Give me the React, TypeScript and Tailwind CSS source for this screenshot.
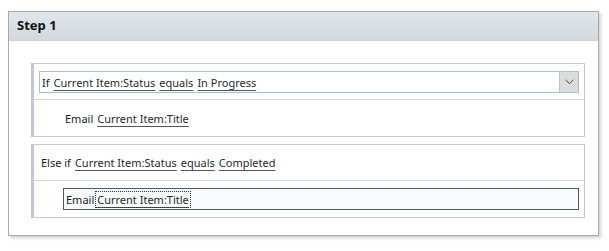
import React from "react";

const L = ({ children }: { children: React.ReactNode }) => (
  <span className="underline decoration-[#555] underline-offset-[3px] text-[#2a2a2a]">{children}</span>
);

export default function App() {
  return (
    <div className="w-[609px] h-[251px] bg-white pt-[11px] pl-[8px] text-[11px] text-[#1a1a1a]" style={{ fontFamily: '"Noto Sans", "Open Sans", sans-serif' }}>
      <div className="w-[591px] h-[225px] border border-[#a9a9a9] bg-white shadow-[2px_2px_3px_rgba(0,0,0,0.18)] flex flex-col">
        <div className="h-[29px] flex items-center pl-[8px] bg-gradient-to-b from-[#e1e5ec] to-[#d3d7de] border-b border-[#d0d3d8]">
          <span className="font-bold text-[13px] text-[#111]">Step 1</span>
        </div>
        <div className="pl-[22px] pr-[13px] pt-[22px] flex flex-col gap-[7px]">
          <div className="h-[74px] border border-[#c9c9c9] border-l-[3px] border-l-[#c3c5da] flex flex-col">
            <div className="h-[36px] border-b border-[#d6d6d6] pl-[5px] pr-[5px] pt-[7px]">
              <div className="h-[22px] border border-[#a9bfcc] flex items-center justify-between pl-[2px]">
                <div className="flex gap-[4px] leading-none">
                  <span>If</span>
                  <L>Current Item:Status</L>
                  <L>equals</L>
                  <L>In Progress</L>
                </div>
                <div className="w-[19px] h-[20px] bg-[#dcdcdc] border-l border-[#b8c4cc] flex items-center justify-center">
                  <svg width="9" height="6" viewBox="0 0 9 6"><path d="M0.5 0.8 L4.5 4.6 L8.5 0.8" stroke="#444" strokeWidth="1" fill="none" /></svg>
                </div>
              </div>
            </div>
            <div className="flex-1 flex items-center pl-[31px] gap-[4px] leading-none">
              <span>Email</span>
              <L>Current Item:Title</L>
            </div>
          </div>
          <div className="h-[74px] border border-[#c9c9c9] border-l-[3px] border-l-[#c3c5da] flex flex-col">
            <div className="h-[36px] border-b border-[#d6d6d6] pl-[7px] flex items-center gap-[4px] leading-none">
              <span>Else if</span>
              <L>Current Item:Status</L>
              <L>equals</L>
              <L>Completed</L>
            </div>
            <div className="flex-1 pl-[29px] pr-[5px] pt-[7px]">
              <div className="h-[22px] border border-[#4b5b70] bg-[#f8fcfc] flex items-center pl-[2px] gap-[2px] leading-none">
                <span>Email</span>
                <span className="outline outline-1 outline-dotted outline-[#333] px-[1px] py-[2px]"><L>Current Item:Title</L></span>
              </div>
            </div>
          </div>
        </div>
      </div>
    </div>
  );
}
